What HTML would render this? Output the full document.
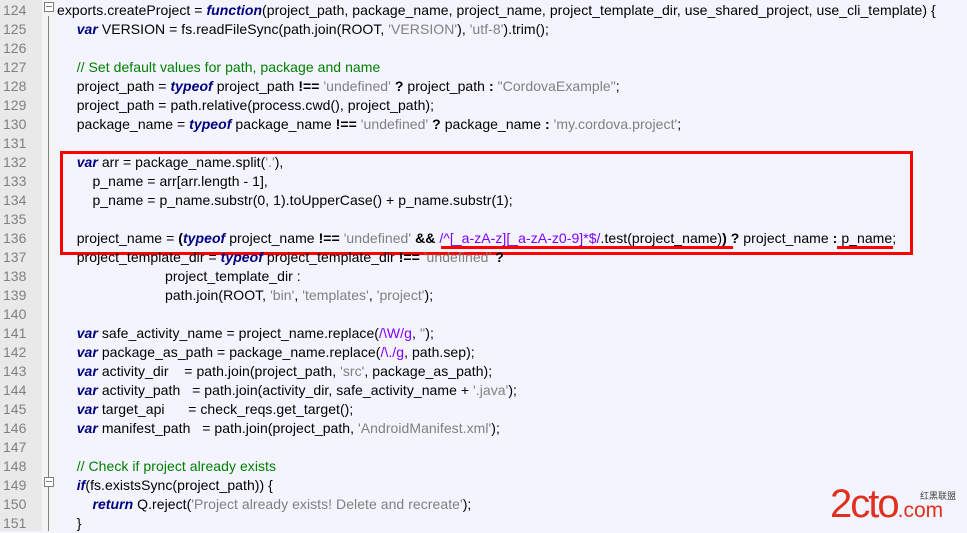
<!DOCTYPE html><html><head><style>
body{margin:0;width:967px;height:531px;overflow:hidden;background:#f3f4fd;font-family:"Liberation Sans","DejaVu Sans",sans-serif;font-size:14px;position:relative}
#g{position:absolute;left:0;top:0;width:42px;height:531px;background:#e9e9e9}
#f{position:absolute;left:42px;top:0;width:14px;height:531px;background:#f4f4f4}
#fl{position:absolute;left:48px;top:16px;width:1px;height:515px;background:#808080}
.l{position:absolute;left:0;height:19px;line-height:19px;white-space:pre;color:#000}
.n{position:absolute;left:3px;width:34px;color:#808080;font-size:14px}
.c{position:absolute;left:57px;letter-spacing:0.05px}
.k{color:#000080;font-weight:bold;font-style:italic}
.s{color:#808080}
.m{color:#008000}
.r{color:#8000ff}
.o{font-weight:bold}
.box{position:absolute;left:44px;top:1px;width:8px;height:8px;border:1px solid #808080;background:#fff}
.box:after{content:"";position:absolute;left:1px;top:3px;width:6px;height:1px;background:#808080}
</style></head><body>
<div id="g"></div><div id="f"></div><div id="fl"></div>
<div style="position:absolute;left:60px;top:151px;width:847px;height:98px;border:3px solid #f00"></div>
<div style="position:absolute;left:441px;top:246px;width:292px;height:3px;background:#f00"></div>
<div style="position:absolute;left:837px;top:246px;width:56px;height:3px;background:#f00"></div>
<div style="position:absolute;left:920px;top:491px;font-size:9px;line-height:10px;color:#444;font-family:'Noto Sans CJK SC',sans-serif">红黑联盟</div>
<div style="position:absolute;left:830px;top:484px;font-size:40px;line-height:40px;color:#e03020;letter-spacing:-2px;font-family:'Liberation Sans',sans-serif">2cto<span style="font-size:21px;letter-spacing:0">.com</span></div>
<div class="l" style="top:1px"><span class="n">124</span><span class="box"></span><span class="c">exports.createProject = <span class="k">function</span>(project_path, package_name, project_name, project_template_dir, use_shared_project, use_cli_template) {</span></div>
<div class="l" style="top:20px"><span class="n">125</span><span class="c">     <span class="k">var</span> VERSION = fs.readFileSync(path.join(ROOT, <span class="s">'VERSION'</span>), <span class="s">'utf-8'</span>).trim();</span></div>
<div class="l" style="top:39px"><span class="n">126</span></div>
<div class="l" style="top:58px"><span class="n">127</span><span class="c">     <span class="m">// Set default values for path, package and name</span></span></div>
<div class="l" style="top:77px"><span class="n">128</span><span class="c">     project_path = <span class="k">typeof</span> project_path <span class="o">!==</span> <span class="s">'undefined'</span> <span class="o">?</span> project_path <span class="o">:</span> <span class="s">"CordovaExample"</span>;</span></div>
<div class="l" style="top:96px"><span class="n">129</span><span class="c">     project_path = path.relative(process.cwd(), project_path);</span></div>
<div class="l" style="top:115px"><span class="n">130</span><span class="c">     package_name = <span class="k">typeof</span> package_name <span class="o">!==</span> <span class="s">'undefined'</span> <span class="o">?</span> package_name <span class="o">:</span> <span class="s">'my.cordova.project'</span>;</span></div>
<div class="l" style="top:134px"><span class="n">131</span></div>
<div class="l" style="top:153px"><span class="n">132</span><span class="c">     <span class="k">var</span> arr = package_name.split(<span class="s">'.'</span>),</span></div>
<div class="l" style="top:172px"><span class="n">133</span><span class="c">         p_name = arr[arr.length - 1],</span></div>
<div class="l" style="top:191px"><span class="n">134</span><span class="c">         p_name = p_name.substr(0, 1).toUpperCase() + p_name.substr(1);</span></div>
<div class="l" style="top:210px"><span class="n">135</span></div>
<div class="l" style="top:229px"><span class="n">136</span><span class="c">     project_name = <span class="o">(</span><span class="k">typeof</span> project_name <span class="o">!==</span> <span class="s">'undefined'</span> <span class="o">&amp;&amp;</span> <span class="r">/^[_a-zA-z][_a-zA-z0-9]*$/</span>.test(project_name)<span class="o">)</span> <span class="o">?</span> project_name <span class="o">:</span> p_name;</span></div>
<div class="l" style="top:248px"><span class="n">137</span><span class="c">     project_template_dir = <span class="k">typeof</span> project_template_dir <span class="o">!==</span> <span class="s">'undefined'</span> <span class="o">?</span></span></div>
<div class="l" style="top:267px"><span class="n">138</span><span class="c" style="left:165px">project_template_dir :</span></div>
<div class="l" style="top:286px"><span class="n">139</span><span class="c" style="left:165px">path.join(ROOT, <span class="s">'bin'</span>, <span class="s">'templates'</span>, <span class="s">'project'</span>);</span></div>
<div class="l" style="top:305px"><span class="n">140</span></div>
<div class="l" style="top:324px"><span class="n">141</span><span class="c">     <span class="k">var</span> safe_activity_name = project_name.replace(<span class="r">/\W/g</span>, <span class="s">''</span>);</span></div>
<div class="l" style="top:343px"><span class="n">142</span><span class="c">     <span class="k">var</span> package_as_path = package_name.replace(<span class="r">/\./g</span>, path.sep);</span></div>
<div class="l" style="top:362px"><span class="n">143</span><span class="c">     <span class="k">var</span> activity_dir    = path.join(project_path, <span class="s">'src'</span>, package_as_path);</span></div>
<div class="l" style="top:381px"><span class="n">144</span><span class="c">     <span class="k">var</span> activity_path   = path.join(activity_dir, safe_activity_name + <span class="s">'.java'</span>);</span></div>
<div class="l" style="top:400px"><span class="n">145</span><span class="c">     <span class="k">var</span> target_api      = check_reqs.get_target();</span></div>
<div class="l" style="top:419px"><span class="n">146</span><span class="c">     <span class="k">var</span> manifest_path   = path.join(project_path, <span class="s">'AndroidManifest.xml'</span>);</span></div>
<div class="l" style="top:438px"><span class="n">147</span></div>
<div class="l" style="top:457px"><span class="n">148</span><span class="c">     <span class="m">// Check if project already exists</span></span></div>
<div class="l" style="top:476px"><span class="n">149</span><span class="box"></span><span class="c">     <span class="k">if</span>(fs.existsSync(project_path)) {</span></div>
<div class="l" style="top:495px"><span class="n">150</span><span class="c">         <span class="k">return</span> Q.reject(<span class="s">'Project already exists! Delete and recreate'</span>);</span></div>
<div class="l" style="top:514px"><span class="n">151</span><span class="c">     }</span></div>
</body></html>
